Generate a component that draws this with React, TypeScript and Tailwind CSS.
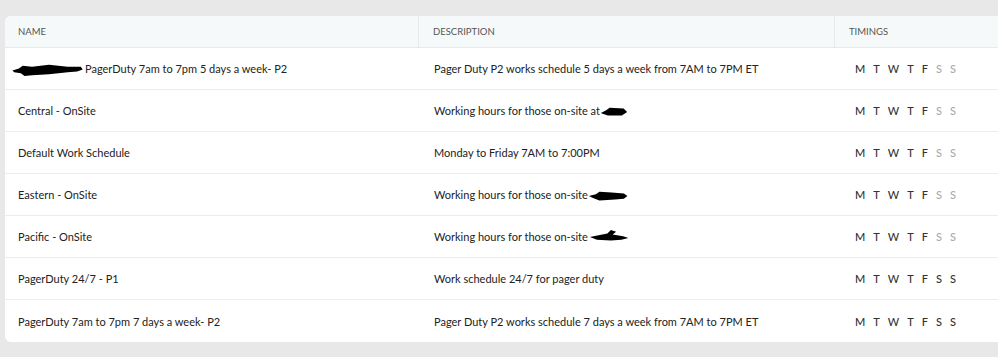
import React from 'react';

type Row = {
  name: React.ReactNode;
  description: React.ReactNode;
  weekend: boolean;
};

// black marker redactions from the original screenshot
const Scribble: React.FC<{ className?: string; variant?: number }> = ({ className, variant = 0 }) => {
  const paths = [
    'M1 9 L8 7 L12 4 L22 5 L40 3 L60 5 L74 5 L76 8 L70 10 L60 11 L40 13 L22 14 L14 15 L10 12 L3 11 Z',
    'M0 9 L6 6 L10 3 L26 4 L30 8 L24 12 L8 12 L2 10 Z',
    'M0 8 L8 6 L12 3 L26 4 L40 5 L44 8 L40 11 L30 12 L12 13 L4 10 Z',
    'M0 8 L10 6 L20 4 L24 0 L30 2 L26 5 L38 7 L44 9 L36 11 L24 12 L8 11 Z',
  ];
  const boxes = ['0 0 78 16', '0 0 30 16', '0 0 46 16', '0 0 46 16'];
  return (
    <svg className={className} viewBox={boxes[variant]} fill="#000">
      <path d={paths[variant]} />
    </svg>
  );
};

const rows: Row[] = [
  {
    name: (
      <span className="inline-flex items-center">
        <Scribble className="w-[76px] h-[15px] -ml-[8px] -mr-[1px]" variant={0} />
        PagerDuty 7am to 7pm 5 days a week- P2
      </span>
    ),
    description: 'Pager Duty P2 works schedule 5 days a week from 7AM to 7PM ET',
    weekend: false,
  },
  {
    name: 'Central - OnSite',
    description: (
      <span className="inline-flex items-center">
        Working hours for those on-site at
        <Scribble className="w-[30px] h-[14px] -ml-[1px]" variant={1} />
      </span>
    ),
    weekend: false,
  },
  { name: 'Default Work Schedule', description: 'Monday to Friday 7AM to 7:00PM', weekend: false },
  {
    name: 'Eastern - OnSite',
    description: (
      <span className="inline-flex items-center">
        Working hours for those on-site
        <Scribble className="w-[44px] h-[14px] -ml-[1px]" variant={2} />
      </span>
    ),
    weekend: false,
  },
  {
    name: 'Pacific - OnSite',
    description: (
      <span className="inline-flex items-center">
        Working hours for those on-site
        <Scribble className="w-[46px] h-[14px] -ml-[1px] -mt-[2px]" variant={3} />
      </span>
    ),
    weekend: false,
  },
  { name: 'PagerDuty 24/7 - P1', description: 'Work schedule 24/7 for pager duty', weekend: true },
  {
    name: 'PagerDuty 7am to 7pm 7 days a week- P2',
    description: 'Pager Duty P2 works schedule 7 days a week from 7AM to 7PM ET',
    weekend: true,
  },
];

const days = ['M', 'T', 'W', 'T', 'F', 'S', 'S'];

const Timings: React.FC<{ weekend: boolean }> = ({ weekend }) => (
  <div className="flex gap-[8px] pl-[5px] text-[11px] font-medium">
    {days.map((d, i) => (
      <span key={i} className={i >= 5 && !weekend ? 'text-[#ababab]' : 'text-[#333]'}>
        {d}
      </span>
    ))}
  </div>
);

export default function App() {
  return (
    <div
      className="min-h-[357px] w-[998px] bg-[#e7e8e7] pt-[16px] pl-[5px] overflow-hidden"
      style={{ fontFamily: 'Lato, "Noto Sans", sans-serif' }}
    >
      <div className="w-[1000px] bg-white rounded-[6px] overflow-hidden">
        <div className="flex h-[32px] bg-[#f6f9fa] border-b border-[#e6eaec] text-[9.5px] text-[#555] uppercase">
          <div className="w-[414px] flex items-center pl-[13px] pt-[2px] border-r border-[#e6eaec]">Name</div>
          <div className="w-[416px] flex items-center pl-[14px] pt-[2px] border-r border-[#e6eaec]">Description</div>
          <div className="flex-1 flex items-center pl-[14px] pt-[2px]">Timings</div>
        </div>
        {rows.map((r, i) => (
          <div
            key={i}
            className={`flex h-[42px] pt-[2px] text-[11px] text-[#222] ${i < rows.length - 1 ? 'border-b border-[#eceeee]' : ''}`}
          >
            <div className="w-[414px] flex items-center pl-[13px]">{r.name}</div>
            <div className="w-[416px] flex items-center pl-[15px]">{r.description}</div>
            <div className="flex-1 flex items-center pl-[15px]">
              <Timings weekend={r.weekend} />
            </div>
          </div>
        ))}
      </div>
    </div>
  );
}
